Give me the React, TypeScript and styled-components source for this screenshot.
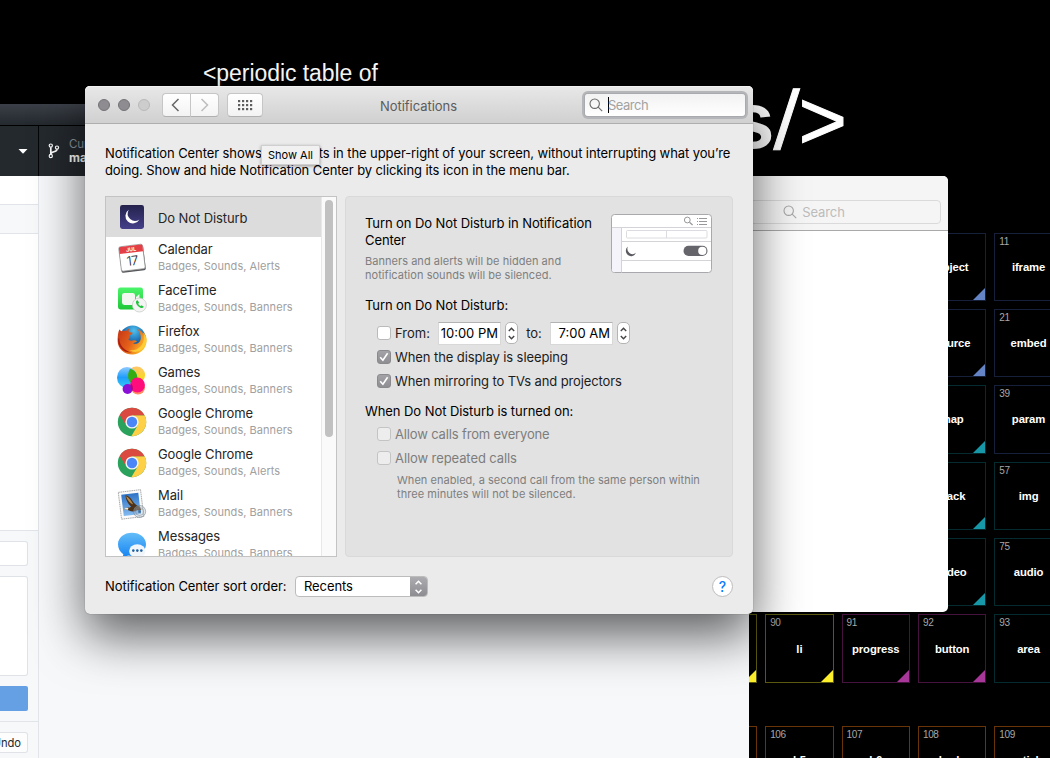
import React from "react";
import styled, { createGlobalStyle, css } from "styled-components";

const GlobalStyle = createGlobalStyle`
  * { box-sizing: border-box; }
  html, body { margin: 0; padding: 0; background: #000; overflow: hidden; }
  body { font-family: Inter, "Liberation Sans", sans-serif; }
`;

const Desktop = styled.main`
  position: relative;
  width: 1050px;
  height: 758px;
  overflow: hidden;
  background: #000;
  font-size: 13px;
  color: #000;
`;

const Txt = styled.span<{ $ls?: number }>`
  white-space: nowrap;
  letter-spacing: ${(p) => p.$ls ?? -0.09}px;
`;

/* ---------- Periodic table page ---------- */

const TablePage = styled.section`
  position: absolute;
  inset: 0;
  color: #fff;
  font-family: "Liberation Sans", Arial, sans-serif;
`;

const PageKicker = styled.div`
  position: absolute;
  left: 203px;
  top: 60px;
  font-size: 23px;
  line-height: 26px;
  letter-spacing: -0.06px;
  white-space: nowrap;
`;

const PageTitle = styled.div`
  position: absolute;
  left: 730px;
  top: 76px;
  display: flex;
  font-size: 80px;
  line-height: 90px;
  white-space: nowrap;
`;

const TitleSlash = styled.span`
  transform: skewX(-3deg);
  margin-left: 0;
  font-size: 83px;
  -webkit-text-stroke: 1px #fff;
`;

const TitleBracket = styled.span`
  font-size: 83px;
  margin-left: 1px;
  -webkit-text-stroke: 1px #fff;
`;

const TitleBold = styled.span`
  font-weight: 700;
`;

const Elements = styled.div`
  position: absolute;
  left: 688.8px;
  top: 232.5px;
  display: flex;
  flex-direction: column;
  gap: 8px;
`;

const ElementRow = styled.div<{ $gap?: boolean }>`
  display: grid;
  grid-template-columns: repeat(5, 68.4px);
  column-gap: 8px;
  margin-top: ${(p) => (p.$gap ? 35.4 : 0)}px;
`;

const Tile = styled.div<{ $line: string; $corner: string; $col?: number }>`
  position: relative;
  height: 68.4px;
  border: 1px solid ${(p) => p.$line};
  grid-column: ${(p) => p.$col ?? "auto"};
  display: flex;
  align-items: center;
  justify-content: center;
  font-size: 11.3px;
  font-weight: 700;
  &::after {
    content: "";
    position: absolute;
    right: 0;
    bottom: 0;
    border-style: solid;
    border-width: 0 0 12px 12px;
    border-color: transparent transparent ${(p) => p.$corner} transparent;
  }
`;

const TileNumber = styled.span`
  position: absolute;
  left: 4px;
  top: 2px;
  font-size: 10px;
  line-height: 11px;
  letter-spacing: -0.4px;
  font-weight: 400;
  color: #a8a8a8;
`;

const tones = {
  blue: ["#16203a", "#6484c6"],
  teal: ["#042c30", "#1698a8"],
  yellow: ["#5c5a10", "#fff02c"],
  purple: ["#46133f", "#a8379a"],
  orange: ["#683408", "#e07a1c"],
} as const;
type Tone = keyof typeof tones;
type Cell = [string, string, Tone];

const rows: { cells: Cell[]; start: number; gap?: boolean }[] = [
  { start: 4, cells: [["10", "object", "blue"], ["11", "iframe", "blue"]] },
  { start: 4, cells: [["20", "source", "blue"], ["21", "embed", "blue"]] },
  { start: 4, cells: [["38", "map", "teal"], ["39", "param", "blue"]] },
  { start: 4, cells: [["56", "track", "teal"], ["57", "img", "teal"]] },
  { start: 4, cells: [["74", "video", "teal"], ["75", "audio", "teal"]] },
  { start: 1, cells: [["89", "ul", "yellow"], ["90", "li", "yellow"], ["91", "progress", "purple"], ["92", "button", "purple"], ["93", "area", "teal"]] },
  { start: 1, gap: true, cells: [["105", "h4", "orange"], ["106", "h5", "orange"], ["107", "h6", "orange"], ["108", "body", "orange"], ["109", "article", "orange"]] },
];

/* ---------- Git client window ---------- */

const GitWindow = styled.section`
  position: absolute;
  left: 0;
  top: 104px;
  width: 749px;
  height: 654px;
  background: #f6f8fa;
  display: flex;
  flex-direction: column;
`;

const GitTitle = styled.div`
  height: 22px;
  background: linear-gradient(#3b3f47, #24292e);
  border-bottom: 1px solid #000;
`;

const GitToolbar = styled.div`
  height: 50px;
  background: #24292e;
  display: flex;
`;

const RepoPicker = styled.div`
  width: 39px;
  border-right: 1px solid #050607;
  display: flex;
  align-items: center;
  justify-content: flex-end;
  padding-right: 10px;
`;

const BranchPicker = styled.div`
  display: flex;
  align-items: center;
  padding-left: 9px;
  gap: 9px;
  font-size: 11.5px;
  line-height: 14px;
  color: #8d959e;
  strong { display: block; color: #fff; font-size: 12px; }
`;

const GitSide = styled.div`
  flex: 1;
  width: 39px;
  border-right: 1px solid #e1e4e8;
  display: flex;
  flex-direction: column;
`;

const SideBlock = styled.div<{ $h: number; $white?: boolean }>`
  height: ${(p) => p.$h}px;
  background: ${(p) => (p.$white ? "#fff" : "#f6f8fa")};
  border-bottom: 1px solid #e1e4e8;
`;

const CommitForm = styled(SideBlock)`
  padding: 10px 10px 0 0;
  display: flex;
  flex-direction: column;
  gap: 10px;
`;

const SideInput = styled.div<{ $h: number }>`
  height: ${(p) => p.$h}px;
  border: 1px solid #dfe3e7;
  border-left: 0;
  border-radius: 0 3px 3px 0;
  background: #fff;
`;

const CommitButton = styled.div`
  height: 25px;
  background: #66a0e4;
  border-radius: 0 2px 2px 0;
`;

const UndoRow = styled.div`
  padding: 10px 10px 0 0;
`;

const UndoButton = styled.div`
  height: 21px;
  border: 1px solid #dfe3e7;
  border-left: 0;
  border-radius: 0 3px 3px 0;
  background: #fdfdfe;
  display: flex;
  justify-content: flex-end;
  align-items: center;
  padding-right: 6px;
  font-size: 11.2px;
  color: #24292e;
`;

/* ---------- Secondary window ---------- */

const BlankWindow = styled.section`
  position: absolute;
  left: 600px;
  top: 176px;
  width: 348px;
  height: 436px;
  background: #fff;
  border-radius: 5px;
  overflow: hidden;
`;

const BlankHeader = styled.div`
  height: 55px;
  background: #f5f5f5;
  border-bottom: 1px solid #a9a9a9;
  display: flex;
  justify-content: flex-end;
  padding: 24px 7px 0 0;
`;

const BlankSearch = styled.div`
  width: 254px;
  height: 24px;
  border: 1px solid #dadada;
  border-radius: 4px;
  display: flex;
  align-items: center;
  justify-content: center;
  gap: 5px;
  color: #bcbcbc;
`;

/* ---------- Notifications window ---------- */

const Prefs = styled.section`
  position: absolute;
  left: 85px;
  top: 86px;
  width: 668px;
  height: 528px;
  background: #ebebeb;
  border-radius: 5px;
  box-shadow: 0 0 1px rgba(0, 0, 0, 0.5), 0 22px 50px rgba(0, 0, 0, 0.62);
  display: flex;
  flex-direction: column;
`;

const TitleBar = styled.header`
  height: 38px;
  flex: none;
  border-radius: 5px 5px 0 0;
  background: linear-gradient(#e8e8e8, #d0d0d0);
  border-bottom: 1px solid #aeaeae;
  box-shadow: inset 0 1px #f2f2f2;
  display: grid;
  grid-template-columns: 234px 1fr 235px;
  align-items: center;
`;

const BarLeft = styled.div`
  display: flex;
  align-items: center;
  padding: 1px 0 0 13px;
`;

const Light = styled.i<{ $off?: boolean }>`
  width: 12px;
  height: 12px;
  border-radius: 50%;
  margin-right: 8px;
  background: ${(p) => (p.$off ? "#cdcdcd" : "#8e8c91")};
  border: 1px solid ${(p) => (p.$off ? "#b9b9b9" : "#747277")};
`;

const BarButton = styled.div<{ $w: number; $side?: "l" | "r"; $ml?: number }>`
  width: ${(p) => p.$w}px;
  height: 24px;
  margin-left: ${(p) => p.$ml ?? 0}px;
  background: linear-gradient(#fff, #f3f3f3);
  border: 1px solid #c6c6c6;
  border-bottom-color: #b0b0b0;
  border-radius: 4px;
  display: flex;
  align-items: center;
  justify-content: center;
  ${(p) => p.$side === "l" && css`border-radius: 4px 0 0 4px; border-right: 0; padding-right: 2px;`}
  ${(p) => p.$side === "r" && css`border-radius: 0 4px 4px 0;`}
`;

const WindowTitle = styled.div`
  text-align: center;
  color: #5c5c5c;
  padding: 3px 0 0;
`;

const SearchField = styled.div`
  width: 160px;
  height: 22px;
  margin: 0 8px 0 2px;
  justify-self: end;
  background: linear-gradient(#f2f2f2, #fff);
  border-radius: 3px;
  box-shadow: 0 0 0 1px #a9aaad, 0 0 0 3px #b5b6b9;
  display: flex;
  align-items: center;
  padding-left: 4px;
  color: #a2a2a2;
`;

const Caret = styled.i`
  width: 1px;
  height: 16px;
  background: #000;
  margin: 0 -1px 0 5px;
`;

const Intro = styled.div`
  padding: 21px 20px 0;
  line-height: 17px;
  display: flex;
  flex-direction: column;
`;

const Tooltip = styled.div`
  position: absolute;
  left: 176px;
  top: 59px;
  width: 59px;
  height: 20px;
  background: #f1f1f1;
  border: 1px solid #cfcfcf;
  box-shadow: 0 1px 3px rgba(0, 0, 0, 0.35);
  font-size: 11px;
  line-height: 18px;
  text-align: center;
`;

const Content = styled.div`
  display: flex;
  gap: 8px;
  padding: 17px 20px 0;
`;

const ListBox = styled.div`
  width: 232px;
  height: 361px;
  border: 1px solid #c3c3c3;
  background: #fff;
  display: flex;
  overflow: hidden;
`;

const AppList = styled.div`
  flex: 1;
`;

const AppRow = styled.div<{ $selected?: boolean }>`
  height: ${(p) => (p.$selected ? 40 : 41)}px;
  background: ${(p) => (p.$selected ? "#dcdcdc" : "transparent")};
  display: flex;
  align-items: center;
  gap: 10px;
  padding-left: 10px;
`;

const AppText = styled.div<{ $single?: boolean }>`
  display: flex;
  flex-direction: column;
  line-height: 17px;
  color: #262626;
  padding: ${(p) => (p.$single ? "3px 0 0" : "0 0 1px")};
`;

const Sub = styled.small`
  font-size: 11px;
  line-height: 16px;
  color: #a0a0a0;
`;

const ScrollTrack = styled.div`
  width: 15px;
  background: #fafafa;
  border-left: 1px solid #e8e8e8;
  padding: 3px 0 0 3px;
`;

const ScrollThumb = styled.div`
  width: 8px;
  height: 237px;
  border-radius: 4px;
  background: #c1c1c1;
`;

const Panel = styled.div`
  width: 388px;
  height: 361px;
  background: #e2e2e2;
  border: 1px solid #d9d9d9;
  border-radius: 4px;
  padding: 17px 20px 0 19px;
  display: flex;
  flex-direction: column;
`;

const PanelTop = styled.div`
  display: flex;
  justify-content: space-between;
  height: 82px;
`;

const PanelLead = styled.div`
  padding-top: 1px;
`;

const Lines = styled.div<{ $lh: number }>`
  display: flex;
  flex-direction: column;
  line-height: ${(p) => p.$lh}px;
`;

const Note = styled(Lines)<{ $pad?: number }>`
  margin-top: ${(p) => (p.$pad ? 3 : 5)}px;
  padding-left: ${(p) => p.$pad ?? 0}px;
  font-size: 11px;
  color: #7e7e7e;
`;

const Heading = styled.div<{ $mt?: number }>`
  height: 19px;
  line-height: 19px;
  margin-top: ${(p) => p.$mt ?? 0}px;
`;

const Options = styled.div<{ $pt: number }>`
  padding: ${(p) => p.$pt}px 0 0 12px;
  display: flex;
  flex-direction: column;
`;

const OptionRow = styled.div<{ $dim?: boolean }>`
  height: 24px;
  display: flex;
  align-items: center;
  color: ${(p) => (p.$dim ? "#7d7d7d" : "#1c1c1c")};
`;

const Check = styled.i<{ $state?: "on" | "dim" }>`
  width: 14px;
  height: 14px;
  margin-right: 4px;
  border-radius: 3px;
  border: 1px solid ${(p) => (p.$state === "on" ? "#8a898d" : p.$state === "dim" ? "#c4c4c4" : "#bababa")};
  background: ${(p) => (p.$state === "on" ? "linear-gradient(#a3a2a6, #8f8e92)" : p.$state === "dim" ? "#ededed" : "#fff")};
  display: flex;
  align-items: center;
  justify-content: center;
`;

const TimeField = styled.div`
  width: 63px;
  height: 23px;
  margin-right: 4px;
  background: #fff;
  border: 1px solid #d8d8d8;
  border-top-color: #b3b3b3;
  display: flex;
  align-items: center;
  justify-content: flex-end;
  padding-right: 2px;
  color: #000;
`;

const Stepper = styled.div`
  width: 13px;
  height: 22px;
  border-radius: 5px;
  background: #fff;
  border: 1px solid #b5b5b5;
  display: flex;
  align-items: center;
  justify-content: center;
`;

const Slot = styled.div<{ $w: number; $center?: boolean }>`
  width: ${(p) => p.$w}px;
  display: flex;
  justify-content: ${(p) => (p.$center ? "center" : "flex-start")};
`;

const Footer = styled.footer`
  display: flex;
  align-items: center;
  height: 21px;
  margin-top: 19px;
  padding: 0 20px;
`;

const Select = styled.div`
  width: 133px;
  height: 21px;
  border: 1px solid #bcbcbc;
  border-radius: 4px;
  background: #fff;
  display: flex;
  align-items: center;
  justify-content: space-between;
  padding-left: 8px;
  overflow: hidden;
`;

const SelectCap = styled.div`
  width: 17px;
  height: 21px;
  background: linear-gradient(#aeadb1, #8c8b90);
  display: flex;
  align-items: center;
  justify-content: center;
`;

const FooterLabel = styled.div`
  width: 190px;
  padding-bottom: 1px;
`;

const SelectValue = styled.div`
  padding-bottom: 1px;
`;

const Help = styled.div`
  margin-left: auto;
  width: 21px;
  height: 21px;
  border-radius: 50%;
  background: #fff;
  border: 1px solid #bdbdbd;
  color: #0a7bff;
  font-size: 14px;
  font-weight: 500;
  display: flex;
  align-items: center;
  justify-content: center;
`;

/* ---------- Icons ---------- */

const Magnifier = ({ color }: { color: string }) => (
  <svg width="14" height="14" viewBox="0 0 14 14" fill="none" stroke={color} strokeWidth="1.1">
    <circle cx="5.7" cy="5.7" r="4.7" />
    <path d="M9.2 9.2 13.2 13.2" />
  </svg>
);

const Chevron = ({ dir, color }: { dir: "l" | "r"; color: string }) => (
  <svg width="9" height="14" viewBox="0 0 9 14" fill="none" stroke={color} strokeWidth="1.5">
    <path d={dir === "l" ? "M7.5 1 1.5 7l6 6" : "M1.5 1l6 6-6 6"} />
  </svg>
);

const GridDots = () => (
  <svg width="15" height="11" viewBox="0 0 15 11" fill="#5e5e5e">
    {[0, 4, 8].map((y) => [0, 4, 8, 12].map((x) => <rect key={`${x}-${y}`} x={x} y={y} width="2.2" height="2.2" />))}
  </svg>
);

const UpDown = ({ color, w = 7, h = 13, sw = 1.4 }: { color: string; w?: number; h?: number; sw?: number }) => (
  <svg width={w} height={h} viewBox="0 0 7 13" fill="none" stroke={color} strokeWidth={sw}>
    <path d="M.8 4 3.5 1.2 6.2 4M.8 9 3.5 11.8 6.2 9" />
  </svg>
);

const Tick = () => (
  <svg width="10" height="10" viewBox="0 0 10 10" fill="none" stroke="#fff" strokeWidth="1.6">
    <path d="M1.2 5.2 3.9 8.3 8.6 1.2" />
  </svg>
);

const BranchIcon = () => (
  <svg width="12" height="16" viewBox="0 0 12 16" fill="none" stroke="#fff" strokeWidth="1.2">
    <circle cx="2.8" cy="2.6" r="1.6" />
    <circle cx="9" cy="4.6" r="1.6" />
    <circle cx="2.8" cy="13" r="1.6" />
    <path d="M2.8 4.2v7.2M9 6.2C9 9.4 3 8 2.8 11.2" strokeWidth="1.7" />
  </svg>
);

const icons: Record<string, React.ReactNode> = {
  moon: (
    <>
      <defs><linearGradient id="dnd" x1="0" y1="0" x2="0" y2="1"><stop stopColor="#24224c" /><stop offset="1" stopColor="#45408a" /></linearGradient></defs>
      <rect x="4" y="4" width="24" height="24" rx="2.4" fill="url(#dnd)" />
      <path d="M12.8 8.8a7.4 7.4 0 1 0 10.6 9.6 7.3 7.3 0 0 1-10.6-9.6Z" fill="#fff" />
    </>
  ),
  calendar: (
    <g transform="rotate(-7 16 16)">
      <rect x="4" y="4.6" width="24.4" height="25" rx="1.8" fill="#55565a" />
      <rect x="4" y="3.4" width="24" height="24.6" rx="1.8" fill="#fff" stroke="#8c8c8c" strokeWidth=".7" />
      <path d="M4.2 10.6V5.2q0-1.6 1.6-1.6h20.4q1.6 0 1.6 1.6v5.4Z" fill="#e43f45" />
      <text x="16" y="9.3" fontSize="5.4" fontWeight="700" fill="#fff" textAnchor="middle" fontFamily="Inter">JUL</text>
      <text x="16" y="23.3" fontSize="13" fontWeight="300" fill="#222" textAnchor="middle" fontFamily="Inter" letterSpacing="-.6">17</text>
    </g>
  ),
  facetime: (
    <>
      <defs><linearGradient id="ft" x1="0" y1="0" x2="0" y2="1"><stop stopColor="#4bf56b" /><stop offset="1" stopColor="#1ec637" /></linearGradient></defs>
      <rect x="2" y="4.5" width="25" height="22" rx="2.4" fill="url(#ft)" />
      <rect x="6" y="9.900" width="13" height="12" rx="2.4" fill="#f2f7f2" />
      <path d="M20 14 23.4 11v10L20 18Z" fill="#f2f7f2" />
      <circle cx="23.4" cy="22" r="7" fill="#f4f4f4" stroke="#c4c8c4" strokeWidth=".7" />
      <path d="M20.400 17.800c-1 1-.3 3.400 1.500 5.200s4.300 2.700 5.300 1.600l.6-.9-2.300-1.500-1 .8c-.9-.3-2-1.500-2.300-2.300l.9-1-1.400-2.400Z" fill="#1fc43a" />
    </>
  ),
  firefox: (
    <>
      <defs>
        <radialGradient id="fg" cx=".55" cy=".2" r=".8"><stop stopColor="#4fc0ee" /><stop offset=".55" stopColor="#1767ae" /><stop offset="1" stopColor="#122c62" /></radialGradient>
        <linearGradient id="ff" x1="0" y1=".2" x2="1" y2=".7"><stop stopColor="#c83a16" /><stop offset=".5" stopColor="#e5621a" /><stop offset="1" stopColor="#ffc928" /></linearGradient>
      </defs>
      <circle cx="16.600" cy="14.500" r="13" fill="url(#fg)" />
      <path d="M3.400 5.200c.6 1.200 1.300 1.700 2.400 2 1.700-.7 3-.4 4.300-.2 1-1.400 2-2.100 3.400-2.400-.8 1.200-1 2.300-.6 3.300l3.800.8c-.3 1.500-2.100 2.100-3.700 3 .8 2 .2 3-.8 3.400 1.300 2.300 3.600 1.500 5.800 1.200 1.700-.2 2.300.8 2.900 1.700-1.600-.3-2.300.8-3.900 1.500 4 1.300 7.500-1 7.800-5.500.2-4-1.500-6.700-3.900-9 4.300 1.300 6.400 4.300 7.200 7.500.4-1.600.3-3-.1-4.300 2 2.800 2.900 6 2.600 9.400-.7 7.500-6.800 13-14.300 13-8.200 0-14.700-6.200-14.700-13.900 0-4.300.4-8.300 1.800-11.500Z" fill="url(#ff)" />
      <path d="M26.500 8c2 4.500 2 10-1.500 14-3 3.500-7.500 5-12 4 9 5.500 17.500-2 17.300-10-.1-3-1.300-5.800-3.800-8Z" fill="#ffd43a" opacity=".8" />
      <path d="M3.200 14c0 7 5 13 12.500 14.500C7 29 1.800 22.500 2 15Z" fill="#a81e12" />
    </>
  ),
  games: (
    <>
      <defs>
        <linearGradient id="gb" x1="0" y1="0" x2="0" y2="1"><stop stopColor="#8ec9ff" /><stop offset=".5" stopColor="#1f9dfc" /><stop offset="1" stopColor="#34d0f4" /></linearGradient>
        <linearGradient id="gy" x1="0" y1="0" x2="0" y2="1"><stop stopColor="#ffc56b" /><stop offset="1" stopColor="#f5e100" /></linearGradient>
      </defs>
      <ellipse cx="20.500" cy="10" rx="8.600" ry="8.500" fill="url(#gy)" />
      <ellipse cx="11" cy="12.500" rx="10" ry="10.500" fill="url(#gb)" />
      <path d="M14 3.900C18 4.500 21.300 8 21.300 12.500c0 3-1.500 5-3.300 6.500-3.500-1-5.900-3.500-5.900-8 0-2.800.6-5 1.900-7.100Z" fill="#35ad12" />
      <circle cx="22" cy="22.500" r="7" fill="#ff8c62" />
      <circle cx="21.500" cy="20" r="7.400" fill="#ff0d7c" />
      <circle cx="11.600" cy="24" r="5" fill="#8a10d8" />
      <path d="M15.200 18.700c1.500 1.400 2.200 4.300 1.400 6.800-1.700-1-2.700-3.800-1.400-6.800Z" fill="#c1006e" />
    </>
  ),
  chrome: (
    <>
      <circle cx="16" cy="16" r="14.200" fill="#2aa25c" />
      <path d="M16 9.300H28.500A14.200 14.200 0 0 1 15.300 30.200L21.800 19.350Z" fill="#fdd045" />
      <path d="M3.700 8.900A14.200 14.200 0 0 1 28.500 9.300H16L10.200 19.350Z" fill="#da4a40" />
      <circle cx="16" cy="16" r="6.600" fill="#f5f5f5" />
      <circle cx="16" cy="16" r="5.200" fill="#4a86f7" />
    </>
  ),
  mail: (
    <>
      <defs><linearGradient id="ml" x1="0" y1="0" x2="0" y2="1"><stop stopColor="#2f73c6" /><stop offset="1" stopColor="#83baf0" /></linearGradient></defs>
      <g transform="rotate(-7 16 16)">
        <rect x="3.800" y="2.800" width="22.400" height="27" fill="#fafafa" stroke="#9c9c9c" strokeWidth=".8" strokeDasharray="1.600 .6" />
        <rect x="6.400" y="5.500" width="17.200" height="21.500" fill="url(#ml)" />
        <path d="M10.500 6.500c2.800.6 4.800 3 6.300 6.300 1.500 3 3.200 5.200 6.400 6.700l1.500 3.500-4.500-.3c-2.500 1.400-5.500 1-8-.6-1.500-.9-3-1.600-4.700-1.500 1.500-1.600 3.300-1.900 5.300-1.300l2-.8c-2.800-3-4.400-7-4.300-12Z" fill="#4c3218" />
        <path d="M11 7.500c2 1 3.500 3.200 4.800 6l1.400 3.200c-2.800-1.400-5.200-4.700-6.200-9.200Z" fill="#b58a4e" />
        <path d="M7.500 20.300c1.500-1.300 3-1.400 4.500-.8l-.8 1.800Z" fill="#f6efdc" />
      </g>
      <circle cx="23.600" cy="23.500" r="6" fill="#b8c6d2" opacity=".35" />
      <circle cx="23.600" cy="23.500" r="6" fill="none" stroke="#76828e" strokeWidth=".6" />
      <circle cx="23.600" cy="23.500" r="4" fill="none" stroke="#76828e" strokeWidth=".5" />
      <rect x="22.300" y="22.200" width="2.600" height="2.600" fill="#3b6da0" />
    </>
  ),
  messages: (
    <>
      <defs><linearGradient id="ms" x1="0" y1="0" x2="0" y2="1"><stop stopColor="#63bdf8" /><stop offset="1" stopColor="#1482f2" /></linearGradient></defs>
      <path d="M16 3.800c8 0 14 4.900 14 11.400S24 27 16 27c-1.500 0-3-.2-4.200-.5-1.600 1.700-4 2.600-6.300 2.500 1-1 1.700-2.300 1.800-3.800C4 23 2 19.500 2 15.200 2 8.700 8 3.800 16 3.800Z" fill="url(#ms)" />
      <ellipse cx="21.300" cy="22" rx="8.200" ry="6.700" fill="#f1f6fb" />
      <circle cx="17.300" cy="21.600" r="1.300" fill="#1e5fa0" />
      <circle cx="21.300" cy="21.600" r="1.300" fill="#1e5fa0" />
      <circle cx="25.300" cy="21.600" r="1.300" fill="#1e5fa0" />
    </>
  ),
};

const AppIcon = ({ name }: { name: string }) => (
  <svg width="32" height="32" viewBox="0 0 32 32">{icons[name]}</svg>
);

const CenterPreview = () => (
  <svg width="101" height="60" viewBox="0 .5 101 60">
    <rect x=".5" y="1" width="100" height="58" rx="3" fill="#fff" stroke="#a9a9ad" />
    <path d="M1 13.500h10v45H3q-2 0-2-2Z" fill="#f5f4fa" />
    <path d="M1 14H100M11 28H100M11 47H100M10.500 14V59" stroke="#d4d4d8" fill="none" />
    <rect x="15.500" y="17" width="80.500" height="7.500" rx="1" fill="#fff" stroke="#dcdce0" />
    <path d="M55.500 17v7.500" stroke="#dcdce0" />
    <circle cx="76.300" cy="6.500" r="2.900" fill="none" stroke="#98989c" />
    <path d="M78.500 8.700 81.600 11.500" stroke="#98989c" strokeWidth="1.200" />
    <path d="M88 5h8M88 8h8M88 11h8" stroke="#98989c" />
    <path d="M86 5h1M86 8h1M86 11h1" stroke="#98989c" />
    <path d="M17 33a5.300 5.300 0 1 0 8 6.300A5.200 5.200 0 0 1 17 33Z" fill="#5b5a60" />
    <rect x="72.500" y="32.300" width="24" height="10.200" rx="5.100" fill="#66656b" />
    <circle cx="91.300" cy="37.400" r="4.100" fill="#fff" />
  </svg>
);

const apps = [
  { name: "Calendar", sub: "Badges, Sounds, Alerts", icon: "calendar" },
  { name: "FaceTime", sub: "Badges, Sounds, Banners", icon: "facetime" },
  { name: "Firefox", sub: "Badges, Sounds, Banners", icon: "firefox" },
  { name: "Games", sub: "Badges, Sounds, Banners", icon: "games" },
  { name: "Google Chrome", sub: "Badges, Sounds, Banners", icon: "chrome" },
  { name: "Google Chrome", sub: "Badges, Sounds, Alerts", icon: "chrome" },
  { name: "Mail", sub: "Badges, Sounds, Banners", icon: "mail" },
  { name: "Messages", sub: "Badges, Sounds, Banners", icon: "messages" },
];

const PeriodicTable = () => (
  <TablePage>
    <PageKicker>&lt;periodic table of</PageKicker>
    <PageTitle><TitleBold>s</TitleBold><TitleSlash>/</TitleSlash><TitleBracket>&gt;</TitleBracket></PageTitle>
    <Elements>
      {rows.map((row, i) => (
        <ElementRow key={i} $gap={row.gap}>
          {row.cells.map(([num, label, tone], j) => (
            <Tile key={num} $line={tones[tone][0]} $corner={tones[tone][1]} $col={row.start + j}>
              <TileNumber>{num}</TileNumber>
              <Txt $ls={-0.1}>{label}</Txt>
            </Tile>
          ))}
        </ElementRow>
      ))}
    </Elements>
  </TablePage>
);

const GitClient = () => (
  <GitWindow>
    <GitTitle />
    <GitToolbar>
      <RepoPicker>
        <svg width="10" height="5" viewBox="0 0 10 5"><path d="M.5 0h9L5 4.700Z" fill="#fff" /></svg>
      </RepoPicker>
      <BranchPicker>
        <BranchIcon />
        <div><Txt>Current</Txt><strong>master</strong></div>
      </BranchPicker>
    </GitToolbar>
    <GitSide>
      <SideBlock $h={29} $white />
      <SideBlock $h={29} />
      <SideBlock $h={297} $white />
      <CommitForm $h={191}>
        <SideInput $h={25} />
        <SideInput $h={100} />
        <CommitButton />
      </CommitForm>
      <UndoRow><UndoButton><Txt>Undo</Txt></UndoButton></UndoRow>
    </GitSide>
  </GitWindow>
);

export default function App() {
  return (
    <Desktop>
      <GlobalStyle />
      <PeriodicTable />
      <GitClient />
      <BlankWindow>
        <BlankHeader>
          <BlankSearch><Magnifier color="#a8a8a8" /><Txt>Search</Txt></BlankSearch>
        </BlankHeader>
      </BlankWindow>
      <Prefs>
        <TitleBar>
          <BarLeft>
            <Light /><Light /><Light $off />
            <BarButton $w={28} $side="l" $ml={4}><Chevron dir="l" color="#666" /></BarButton>
            <BarButton $w={29} $side="r"><Chevron dir="r" color="#bdbdbd" /></BarButton>
            <BarButton $w={36} $ml={8}><GridDots /></BarButton>
          </BarLeft>
          <WindowTitle><Txt $ls={-0.05}>Notifications</Txt></WindowTitle>
          <SearchField>
            <Magnifier color="#6b6b6b" /><Caret /><Txt $ls={-0.5}>Search</Txt>
          </SearchField>
        </TitleBar>
        <Intro>
          <Txt>Notification Center shows your alerts in the upper-right of your screen, without interrupting what you’re</Txt>
          <Txt>doing. Show and hide Notification Center by clicking its icon in the menu bar.</Txt>
        </Intro>
        <Content>
          <ListBox>
            <AppList>
              <AppRow $selected>
                <AppIcon name="moon" />
                <AppText $single><Txt>Do Not Disturb</Txt></AppText>
              </AppRow>
              {apps.map((a, i) => (
                <AppRow key={i}>
                  <AppIcon name={a.icon} />
                  <AppText>
                    <Txt>{a.name}</Txt>
                    <Sub><Txt $ls={0.05}>{a.sub}</Txt></Sub>
                  </AppText>
                </AppRow>
              ))}
            </AppList>
            <ScrollTrack><ScrollThumb /></ScrollTrack>
          </ListBox>
          <Panel>
            <PanelTop>
              <PanelLead>
                <Lines $lh={17}>
                  <Txt>Turn on Do Not Disturb in Notification</Txt>
                  <Txt>Center</Txt>
                </Lines>
                <Note $lh={14}>
                  <Txt $ls={0.04}>Banners and alerts will be hidden and</Txt>
                  <Txt $ls={0.04}>notification sounds will be silenced.</Txt>
                </Note>
              </PanelLead>
              <CenterPreview />
            </PanelTop>
            <Heading><Txt>Turn on Do Not Disturb:</Txt></Heading>
            <Options $pt={6}>
              <OptionRow>
                <Check />
                <Slot $w={43}><Txt $ls={0}>From:</Txt></Slot>
                <TimeField><Txt $ls={0}>10:00 PM</Txt></TimeField>
                <Stepper><UpDown color="#444" /></Stepper>
                <Slot $w={32} $center><Txt $ls={0}>to:</Txt></Slot>
                <TimeField><Txt $ls={0}>7:00 AM</Txt></TimeField>
                <Stepper><UpDown color="#444" /></Stepper>
              </OptionRow>
              <OptionRow><Check $state="on"><Tick /></Check><Txt>When the display is sleeping</Txt></OptionRow>
              <OptionRow><Check $state="on"><Tick /></Check><Txt $ls={-0.11}>When mirroring to TVs and projectors</Txt></OptionRow>
            </Options>
            <Heading $mt={9}><Txt $ls={-0.07}>When Do Not Disturb is turned on:</Txt></Heading>
            <Options $pt={1}>
              <OptionRow $dim><Check $state="dim" /><Txt $ls={-0.15}>Allow calls from everyone</Txt></OptionRow>
              <OptionRow $dim><Check $state="dim" /><Txt>Allow repeated calls</Txt></OptionRow>
              <Note $lh={14} $pad={20}>
                <Txt $ls={0.03}>When enabled, a second call from the same person within</Txt>
                <Txt $ls={0.05}>three minutes will not be silenced.</Txt>
              </Note>
            </Options>
          </Panel>
        </Content>
        <Footer>
          <FooterLabel><Txt $ls={-0.07}>Notification Center sort order:</Txt></FooterLabel>
          <Select><SelectValue><Txt>Recents</Txt></SelectValue><SelectCap><UpDown color="#fff" w={9} h={14} /></SelectCap></Select>
          <Help>?</Help>
        </Footer>
        <Tooltip><Txt $ls={0}>Show All</Txt></Tooltip>
      </Prefs>
    </Desktop>
  );
}
